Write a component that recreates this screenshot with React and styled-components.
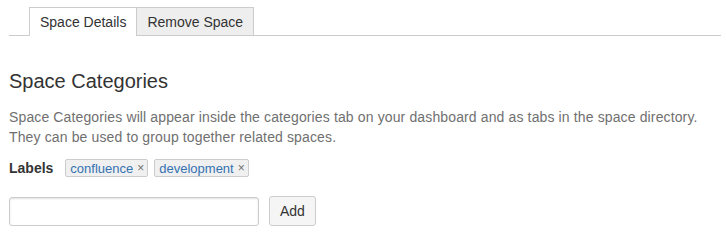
import styled, { createGlobalStyle } from 'styled-components'

const Global = createGlobalStyle`
	body{
		margin: 0;
		background: #fff;
		font-family: "Liberation Sans", Arial, sans-serif;
		color: #333;
	}
`

const Page = styled.div`
	padding: 7px 5px 0 9px;
`

const TabBar = styled.div`
	display: flex;
	padding-left: 20px;
	border-bottom: 1px solid #ccc;
`

const Tab = styled.div`
	box-sizing: border-box;
	padding: 0 10px;
	display: flex;
	align-items: center;
	font-size: 14px;
	color: #333;
	border: 1px solid #ccc;
	border-bottom: none;
	margin-left: ${props => props.first ? '0' : '-1px'};
	margin-bottom: -1px;
	background: ${props => props.active ? '#fff' : '#eee'};
	height: ${props => props.active ? '29px' : '28px'};
`

const Heading = styled.h2`
	margin: 32px 0 0;
	font-size: 20px;
	font-weight: 400;
	color: #333;
	line-height: 26px;
`

const Text = styled.p`
	margin: 13px 0 0;
	font-size: 14px;
	line-height: 20px;
	letter-spacing: 0.13px;
	color: #707070;
`

const LabelRow = styled.div`
	display: flex;
	align-items: center;
	margin-top: 12px;
	gap: 6px;
`

const LabelTitle = styled.span`
	font-size: 14px;
	font-weight: 700;
	color: #333;
	margin-right: 6px;
`

const Tag = styled.span`
	display: inline-flex;
	align-items: center;
	height: 18px;
	box-sizing: border-box;
	padding: 0 3px 0 4px;
	border: 1px solid #ccc;
	border-radius: 2px;
	background: #f0f0f0;
	font-size: 13px;
	color: #3572b0;
	span{
		color: #707070;
		font-size: 12px;
		margin-left: 4px;
	}
`

const Form = styled.div`
	display: flex;
	align-items: center;
	gap: 10px;
	margin-top: 19px;
`

const Input = styled.input`
	width: 250px;
	height: 29px;
	box-sizing: border-box;
	border: 1px solid #ccc;
	border-radius: 3px;
	box-shadow: inset 0 1px 2px rgba(0,0,0,.12);
	font-size: 14px;
	font-family: inherit;
	padding: 0 6px;
	outline: none;
`

const Button = styled.button`
	height: 30px;
	box-sizing: border-box;
	padding: 0 10px;
	border: 1px solid #ccc;
	border-radius: 3px;
	background: #f5f5f5;
	font-family: inherit;
	font-size: 14px;
	color: #333;
`

export default function App(){
	const labels = ['confluence', 'development']

	return(<>
		<Global/>
		<Page>
			<TabBar>
				<Tab first active>Space Details</Tab>
				<Tab>Remove Space</Tab>
			</TabBar>
			<Heading>Space Categories</Heading>
			<Text>
				Space Categories will appear inside the categories tab on your dashboard and as tabs in the space directory.<br/>
				They can be used to group together related spaces.
			</Text>
			<LabelRow>
				<LabelTitle>Labels</LabelTitle>
				{labels.map(l =>
					<Tag key={l}>{l}<span>×</span></Tag>
				)}
			</LabelRow>
			<Form>
				<Input type="text"/>
				<Button>Add</Button>
			</Form>
		</Page>
	</>)
}
